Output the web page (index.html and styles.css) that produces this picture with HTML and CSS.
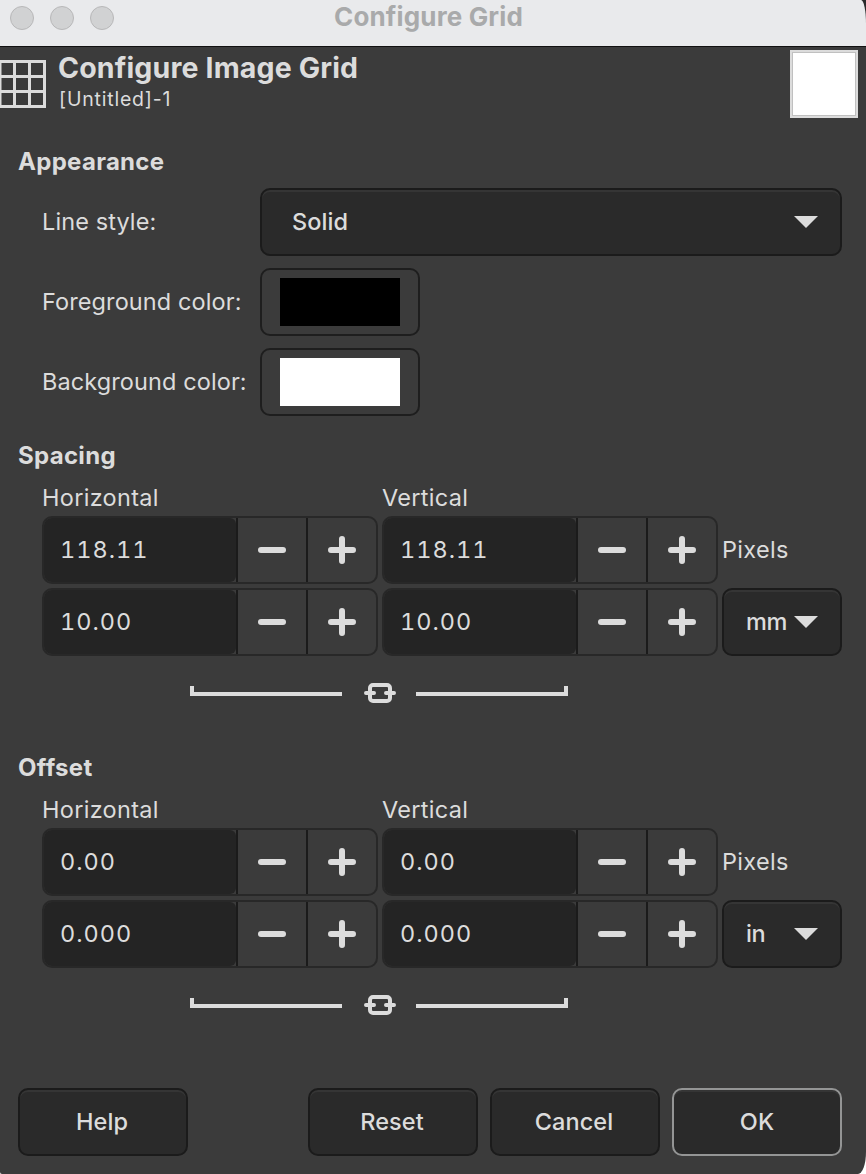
FILE: index.html
```
<!DOCTYPE html>
<html lang="en">
<head>
    <meta charset="UTF-8">
    <meta name="viewport" content="width=device-width, initial-scale=1.0">
    <title>Configure Grid</title>
    <link rel="stylesheet" href="styles.css">
</head>
<body>

<!-- Shared icons -->
<svg class="sprite" width="0" height="0">
    <symbol id="minus" viewBox="0 0 28 28">
        <path d="M3 14H25" stroke="currentColor" stroke-width="6" stroke-linecap="round"/>
    </symbol>
    <symbol id="plus" viewBox="0 0 28 28">
        <path d="M3 14H25M14 3V25" stroke="currentColor" stroke-width="6" stroke-linecap="round"/>
    </symbol>
    <symbol id="arrow" viewBox="0 0 24 12">
        <path d="M0 0H24L12 12Z" fill="currentColor"/>
    </symbol>
    <symbol id="chain" viewBox="0 0 32 20">
        <rect x="6" y="2" width="20" height="16" rx="3" fill="none" stroke="currentColor" stroke-width="4"/>
        <path d="M2 10H10M22 10H30" stroke="currentColor" stroke-width="4" stroke-linecap="round"/>
    </symbol>
</svg>

<div class="window">
    <div class="titlebar">
        <span class="dot"></span>
        <span class="dot"></span>
        <span class="dot"></span>
        <span class="window-title">Configure Grid</span>
    </div>

    <div class="header">
        <svg class="grid-icon" width="46" height="48" viewBox="0 0 46 48">
            <path d="M0 1.5H46M0 16.5H46M0 31.5H46M0 46.5H46M0 0V48M14.5 0V48M29.5 0V48M44.5 0V48" stroke="#dcdcdc" stroke-width="3"/>
        </svg>
        <div class="header-text">
            <h1>Configure Image Grid</h1>
            <p>[Untitled]-1</p>
        </div>
        <div class="thumb"></div>
    </div>

    <!-- Appearance -->
    <h2 class="first">Appearance</h2>
    <div class="appearance">
        <label>Line style:</label>
        <button class="btn combo"><span>Solid</span><svg width="24" height="12"><use href="#arrow"/></svg></button>
        <label>Foreground color:</label>
        <button class="color"><span class="swatch black"></span></button>
        <label>Background color:</label>
        <button class="color"><span class="swatch white"></span></button>
    </div>

    <!-- Spacing -->
    <h2>Spacing</h2>
    <div class="sizes">
        <span class="col-label">Horizontal</span>
        <span class="col-label">Vertical</span>
        <span></span>

        <div class="spin"><span class="value">118.11</span><button><svg width="28" height="28"><use href="#minus"/></svg></button><button><svg width="28" height="28"><use href="#plus"/></svg></button></div>
        <div class="spin"><span class="value">118.11</span><button><svg width="28" height="28"><use href="#minus"/></svg></button><button><svg width="28" height="28"><use href="#plus"/></svg></button></div>
        <span class="col-label">Pixels</span>

        <div class="spin"><span class="value">10.00</span><button><svg width="28" height="28"><use href="#minus"/></svg></button><button><svg width="28" height="28"><use href="#plus"/></svg></button></div>
        <div class="spin"><span class="value">10.00</span><button><svg width="28" height="28"><use href="#minus"/></svg></button><button><svg width="28" height="28"><use href="#plus"/></svg></button></div>
        <button class="btn combo small"><span>mm</span><svg width="24" height="12"><use href="#arrow"/></svg></button>
    </div>
    <div class="link">
        <span class="bracket left"></span>
        <svg width="32" height="20"><use href="#chain"/></svg>
        <span class="bracket right"></span>
    </div>

    <!-- Offset -->
    <h2>Offset</h2>
    <div class="sizes">
        <span class="col-label">Horizontal</span>
        <span class="col-label">Vertical</span>
        <span></span>

        <div class="spin"><span class="value">0.00</span><button><svg width="28" height="28"><use href="#minus"/></svg></button><button><svg width="28" height="28"><use href="#plus"/></svg></button></div>
        <div class="spin"><span class="value">0.00</span><button><svg width="28" height="28"><use href="#minus"/></svg></button><button><svg width="28" height="28"><use href="#plus"/></svg></button></div>
        <span class="col-label">Pixels</span>

        <div class="spin"><span class="value">0.000</span><button><svg width="28" height="28"><use href="#minus"/></svg></button><button><svg width="28" height="28"><use href="#plus"/></svg></button></div>
        <div class="spin"><span class="value">0.000</span><button><svg width="28" height="28"><use href="#minus"/></svg></button><button><svg width="28" height="28"><use href="#plus"/></svg></button></div>
        <button class="btn combo small"><span>in</span><svg width="24" height="12"><use href="#arrow"/></svg></button>
    </div>
    <div class="link">
        <span class="bracket left"></span>
        <svg width="32" height="20"><use href="#chain"/></svg>
        <span class="bracket right"></span>
    </div>

    <div class="actions">
        <button class="btn help">Help</button>
        <button class="btn">Reset</button>
        <button class="btn">Cancel</button>
        <button class="btn default">OK</button>
    </div>
</div>

</body>
</html>
```

FILE: styles.css
```
* {
    box-sizing: border-box;
}
body {
    margin: 0;
    background: linear-gradient(#2a2a2a 50%, #fff 50%);
    font-family: Inter, "Liberation Sans", sans-serif;
    font-size: 23.5px;
    line-height: 28px;
    letter-spacing: 0.1px;
    color: #dcdcdc;
}
.sprite {
    display: none;
}
.window {
    width: 866px;
    height: 1174px;
    overflow: hidden;
    background-color: #3b3b3b;
    border-radius: 0 5px 8px 2px / 0 24px 22px 2px;
}
h1, h2, p {
    margin: 0;
}
button {
    margin: 0;
    padding: 0;
    border: none;
    background: none;
    font: inherit;
    letter-spacing: inherit;
    color: inherit;
}
svg {
    display: block;
    flex: none;
}

/* Title bar */
.titlebar {
    display: flex;
    height: 47px;
    padding: 6px 0 0 10px;
    gap: 16px;
    background-color: #e9eaec;
    border-bottom: 1px solid #111;
}
.dot {
    width: 24px;
    height: 24px;
    border-radius: 50%;
    background-color: #d1d2d3;
    border: 1px solid #b8b8b9;
}
.window-title {
    margin: -3px 0 0 204px;
    font-size: 26px;
    font-weight: 700;
    color: #a9aaab;
    white-space: nowrap;
    letter-spacing: 0.15px;
}

/* Header */
.header {
    display: flex;
    height: 73px;
    padding: 3px 8px 0 0;
}
.grid-icon {
    margin-top: 10px;
}
.header-text {
    flex: 1;
    padding-left: 12px;
}
h1 {
    font-size: 28.5px;
    line-height: 36px;
    letter-spacing: 0.15px;
}
.header-text p {
    padding-left: 1px;
    font-size: 19.5px;
    line-height: 26px;
    letter-spacing: 0.8px;
}
.thumb {
    width: 68px;
    height: 68px;
    background-color: #fff;
    border: 2px solid #dcdcdc;
    box-shadow: inset 0 0 0 1px #c0c0c0;
}

h2 {
    margin-left: 18px;
    font-size: 24px;
    line-height: 28px;
    letter-spacing: 0.3px;
}
h2.first {
    margin-top: 28px;
}

/* Appearance */
.appearance {
    display: grid;
    grid-template-columns: 218px 1fr;
    grid-auto-rows: 68px;
    row-gap: 12px;
    align-items: center;
    margin: 12px 24px 26px 42px;
}
.btn {
    height: 68px;
    background-color: #2a2a2a;
    border: 2px solid #1b1b1b;
    border-radius: 10px;
    box-shadow: inset 0 2px #353535;
    font-weight: 500;
}
.combo {
    display: flex;
    align-items: center;
    justify-content: space-between;
    padding: 0 22px 0 30px;
}
.combo.small {
    padding: 0 22px;
    letter-spacing: -0.3px;
}
.color {
    width: 160px;
    height: 68px;
    padding: 8px 18px;
    border: 2px solid #1e1e1e;
    border-radius: 10px;
}
.swatch {
    display: block;
    height: 48px;
}
.black {
    background-color: #000;
}
.white {
    background-color: #fff;
}

/* Spacing and offset */
.sizes {
    display: grid;
    grid-template-columns: 336px 336px 120px;
    grid-template-rows: 28px 68px 68px;
    gap: 4px;
    align-items: center;
    margin: 14px 0 0 42px;
}
.col-label {
    letter-spacing: 0.3px;
}
.spin {
    display: flex;
    height: 68px;
    border: 2px solid #282828;
    border-radius: 10px;
    overflow: hidden;
}
.value {
    flex: 1;
    padding-left: 16px;
    line-height: 64px;
    background-color: #242424;
    border-radius: 0 6px 6px 0;
    font-variant-numeric: tabular-nums;
    letter-spacing: 1px;
}
.spin button {
    display: flex;
    align-items: center;
    justify-content: center;
    width: 70px;
    border-left: 2px solid #1b1b1b;
}
.link {
    display: flex;
    align-items: flex-start;
    height: 20px;
    margin: 27px 0 51px 190px;
}
.link svg {
    margin: 0 20px 0 22px;
}
.bracket {
    width: 152px;
    height: 10px;
    margin-top: 3px;
    border-bottom: 4px solid #dcdcdc;
}
.left {
    border-left: 4px solid #dcdcdc;
}
.right {
    border-right: 4px solid #dcdcdc;
}

.actions {
    display: flex;
    gap: 12px;
    margin: 73px 24px 0 18px;
}
.actions .btn {
    width: 170px;
    padding-right: 2px;
}
.help {
    margin-right: 108px;
}
.actions .default {
    padding-right: 0;
    border-color: #949595;
}
```
